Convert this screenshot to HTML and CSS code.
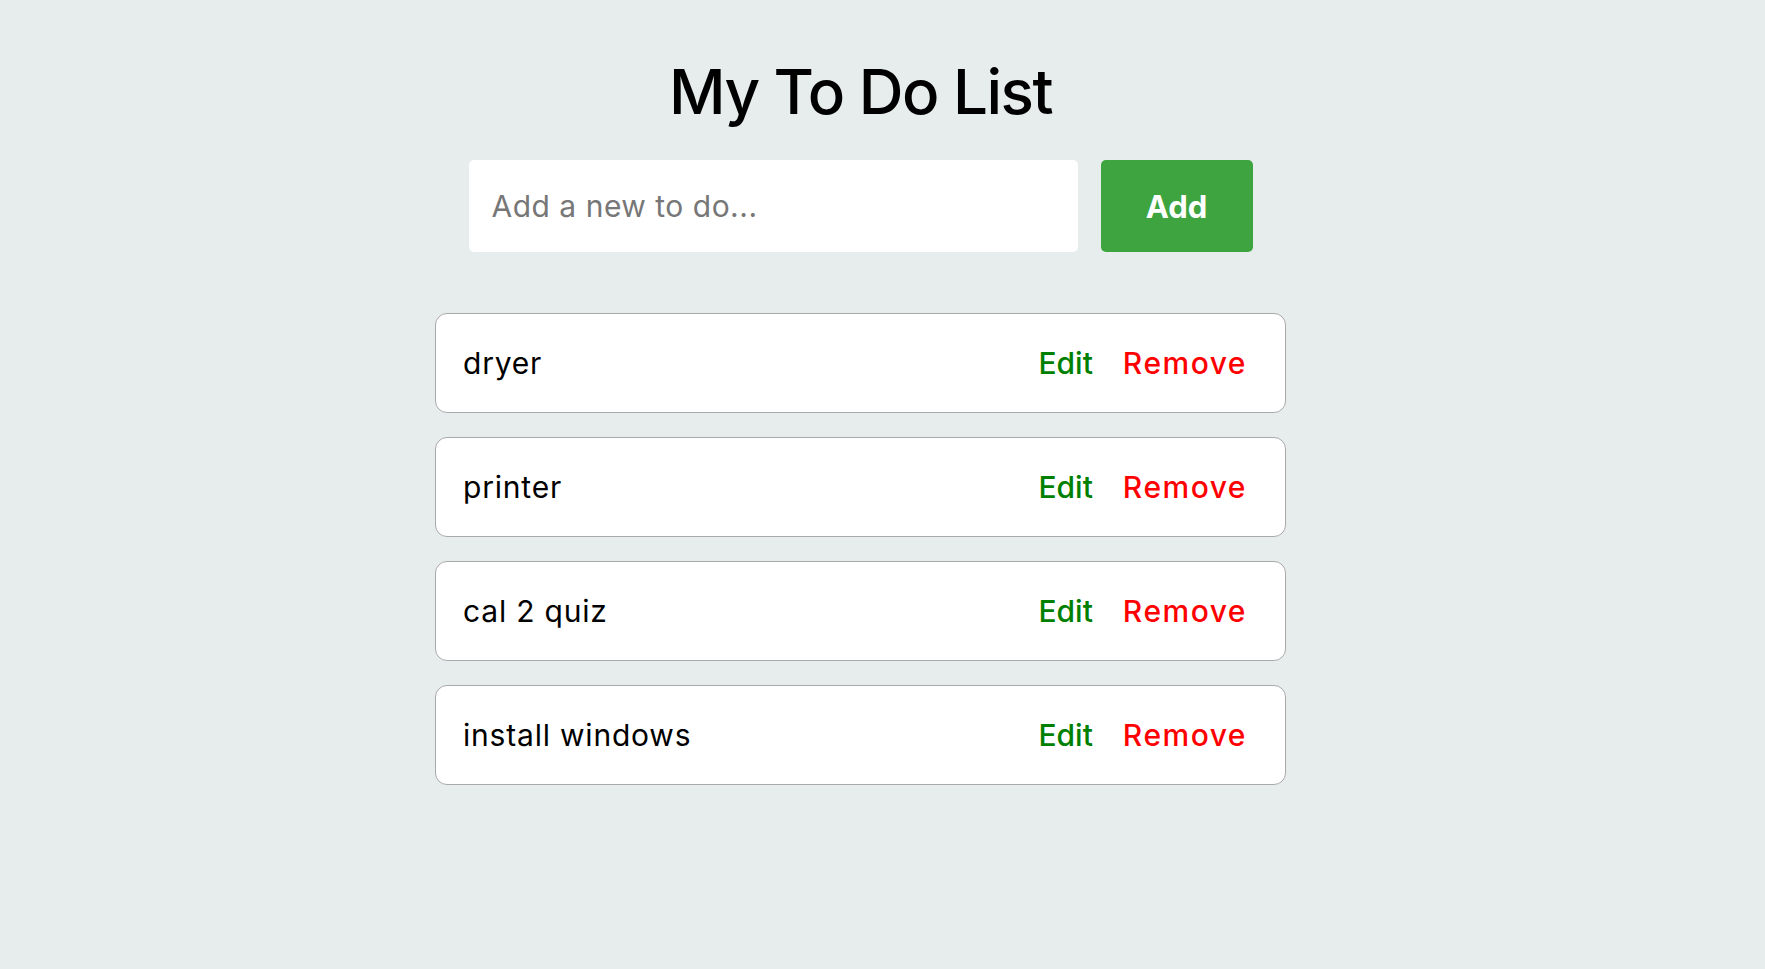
FILE: index.html
```html
<!DOCTYPE html>
<html lang="en">
<head>
<meta charset="utf-8">
<title>My To Do List</title>
<link rel="stylesheet" href="styles.css">
</head>
<body>
<main class="app">
  <h1 class="title">My To Do List</h1>
  <form class="add-row" onsubmit="return false;">
    <input class="add-input" type="text" placeholder="Add a new to do...">
    <button class="add-btn" type="submit">Add</button>
  </form>
  <ul class="todo-list">
    <li class="todo">
      <span class="todo-text">dryer</span>
      <div class="actions"><button class="edit">Edit</button><button class="remove">Remove</button></div>
    </li>
    <li class="todo">
      <span class="todo-text">printer</span>
      <div class="actions"><button class="edit">Edit</button><button class="remove">Remove</button></div>
    </li>
    <li class="todo">
      <span class="todo-text">cal 2 quiz</span>
      <div class="actions"><button class="edit">Edit</button><button class="remove">Remove</button></div>
    </li>
    <li class="todo">
      <span class="todo-text">install windows</span>
      <div class="actions"><button class="edit">Edit</button><button class="remove">Remove</button></div>
    </li>
  </ul>
</main>
</body>
</html>
```
FILE: styles.css
```css
* { box-sizing: border-box; }
html, body { margin: 0; padding: 0; }
body {
  background: #e7ecec;
  font-family: "Inter", "Open Sans", sans-serif;
  color: #000;
  min-height: 969px;
}
.app {
  width: 1721px;
  display: flex;
  flex-direction: column;
  align-items: center;
  padding-top: 61px;
}
.title {
  margin: 0;
  font-size: 62px;
  line-height: 62px;
  font-weight: 500;
  letter-spacing: -1.5px;
}
.add-row {
  display: flex;
  gap: 23px;
  margin-top: 37px;
}
.add-input {
  width: 609px;
  height: 92px;
  border: none;
  border-radius: 5px;
  background: #fff;
  padding: 0 23px;
  font-family: inherit;
  font-size: 30px;
  letter-spacing: 0.5px;
  color: #000;
  outline: none;
}
.add-input::placeholder { color: #777; }
.add-btn {
  width: 152px;
  height: 92px;
  border: none;
  border-radius: 5px;
  background: #3da440;
  color: #fff;
  font-family: inherit;
  font-size: 31px;
  font-weight: 700;
}
.todo-list {
  list-style: none;
  margin: 61px 0 0;
  padding: 0;
  display: flex;
  flex-direction: column;
  gap: 24px;
}
.todo {
  width: 851px;
  height: 100px;
  background: #fff;
  border: 1px solid #a9a9a9;
  border-radius: 12px;
  display: flex;
  align-items: center;
  justify-content: space-between;
  padding: 0 38px 0 27px;
}
.todo-text {
  font-size: 30px;
  font-weight: 400;
  letter-spacing: 0.8px;
}
.actions {
  display: flex;
  gap: 30px;
}
.actions button {
  border: none;
  background: none;
  padding: 0;
  font-family: inherit;
  font-size: 30px;
  font-weight: 500;
}
.edit { color: #008000; }
.remove { color: #ff0000; letter-spacing: 1.5px; }
```
